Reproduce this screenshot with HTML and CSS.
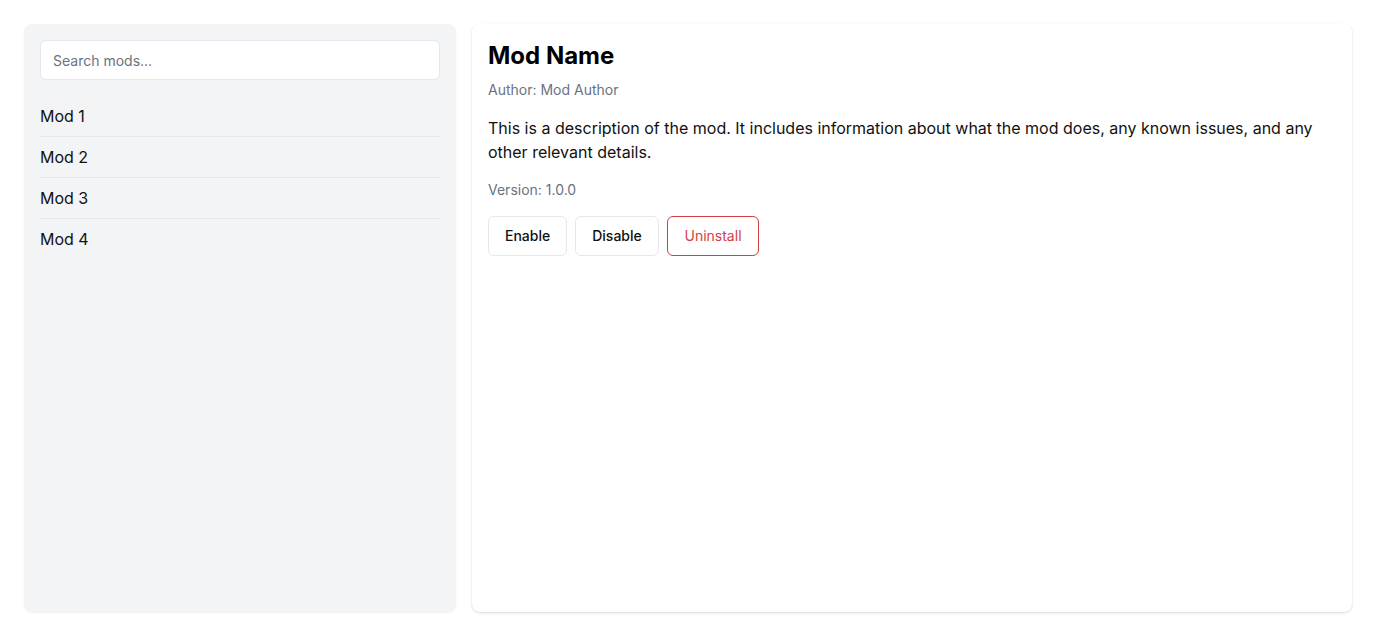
FILE: index.html
```html
<!DOCTYPE html>
<html lang="en">
<head>
<meta charset="utf-8">
<title>Mod Manager</title>
<link rel="stylesheet" href="styles.css">
</head>
<body>
<div class="app">
  <aside class="sidebar">
    <input class="search" type="text" placeholder="Search mods...">
    <ul class="mod-list">
      <li class="mod-item">Mod 1</li>
      <li class="mod-item">Mod 2</li>
      <li class="mod-item">Mod 3</li>
      <li class="mod-item">Mod 4</li>
    </ul>
  </aside>
  <main class="details">
    <h1 class="title">Mod Name</h1>
    <p class="author">Author: Mod Author</p>
    <p class="description">This is a description of the mod. It includes information about what the mod does, any known issues, and any other relevant details.</p>
    <p class="version">Version: 1.0.0</p>
    <div class="actions">
      <button class="btn">Enable</button>
      <button class="btn">Disable</button>
      <button class="btn btn-danger">Uninstall</button>
    </div>
  </main>
</div>
</body>
</html>
```
FILE: styles.css
```css
* { box-sizing: border-box; }
html, body { margin: 0; height: 100%; }
body {
  font-family: Inter, "Noto Sans", sans-serif;
  background: #ffffff;
  color: #111827;
}
.app {
  display: flex;
  gap: 16px;
  padding: 24px;
  height: 100vh;
}
.sidebar {
  width: 432px;
  flex-shrink: 0;
  background: #f3f4f6;
  border-radius: 8px;
  padding: 16px;
  box-shadow: 0 1px 2px rgba(0,0,0,0.06);
}
.search {
  display: block;
  width: 100%;
  height: 40px;
  padding: 0 12px;
  border: 1px solid #e5e7eb;
  border-radius: 6px;
  background: #fff;
  font-family: inherit;
  font-size: 14px;
  color: #111827;
  outline: none;
}
.search::placeholder { color: #6b7280; }
.mod-list {
  list-style: none;
  margin: 16px 0 0;
  padding: 0;
}
.mod-item {
  padding: 8px 0;
  font-size: 16px;
  line-height: 24px;
  color: #111;
  border-bottom: 1px solid #e5e7eb;
}
.mod-item:last-child { border-bottom: none; }
.details {
  flex: 1;
  background: #fff;
  border-radius: 8px;
  padding: 16px;
  box-shadow: 0 1px 3px rgba(0,0,0,0.1), 0 1px 2px rgba(0,0,0,0.06);
}
.title {
  margin: 0;
  font-size: 24px;
  line-height: 32px;
  font-weight: 700;
  color: #000;
}
.author {
  margin: 8px 0 0;
  font-size: 14px;
  line-height: 20px;
  color: #6b7280;
}
.description {
  margin: 16px 0 0;
  font-size: 16px;
  line-height: 24px;
  color: #111;
}
.version {
  margin: 16px 0 0;
  font-size: 14px;
  line-height: 20px;
  color: #6b7280;
}
.actions {
  display: flex;
  gap: 8px;
  margin-top: 16px;
}
.btn {
  height: 40px;
  padding: 0 16px 1px;
  border: 1px solid #e5e7eb;
  border-radius: 6px;
  background: #fff;
  font-family: inherit;
  font-size: 14px;
  font-weight: 500;
  color: #111;
  cursor: pointer;
}
.btn-danger {
  border-color: #d13f45;
  color: #d13f45;
  font-weight: 400;
  padding: 0 16px 1px 16.5px;
  min-width: 92px;
}
```
